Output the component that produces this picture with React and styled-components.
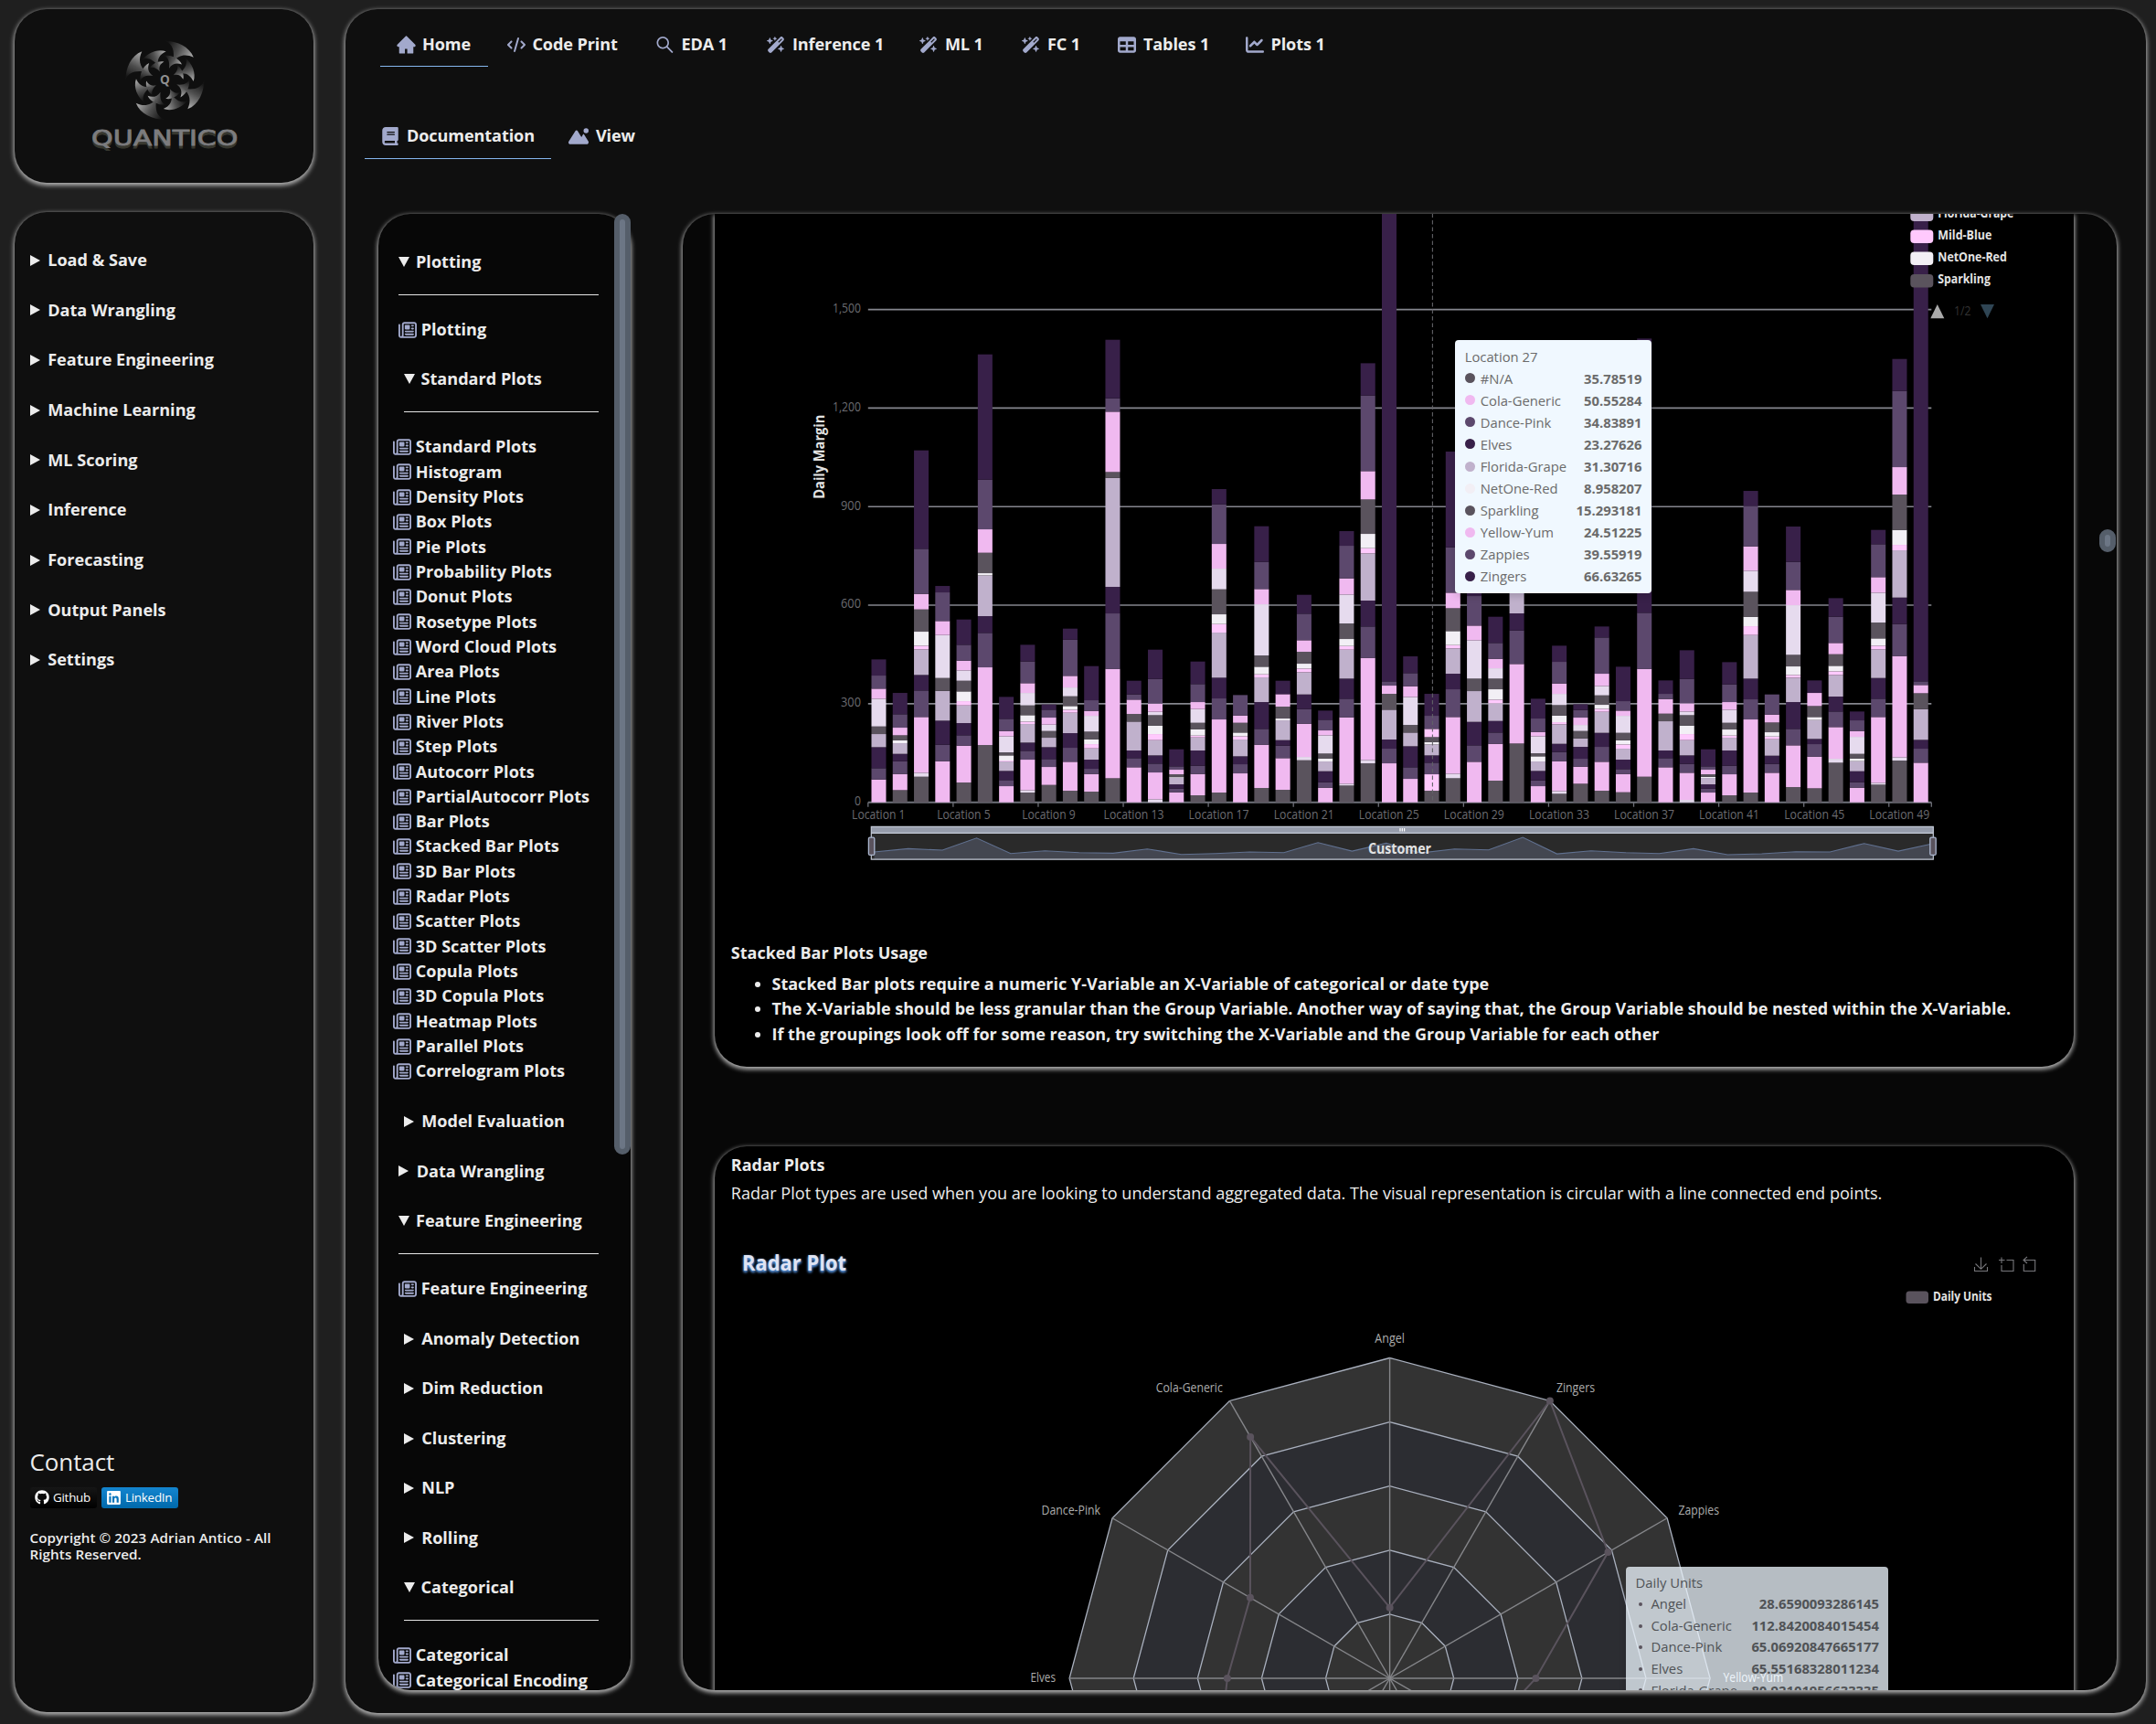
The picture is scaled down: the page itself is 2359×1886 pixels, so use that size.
import React from "react";
import styled, { createGlobalStyle } from "styled-components";
import {
  FaCode,
  FaWandMagicSparkles,
  FaTable,
  FaChartLine,
  FaBook,
  FaMountainSun,
  FaRegNewspaper,
  FaGithub,
  FaLinkedin,
} from "react-icons/fa6";
import { AiFillHome, AiOutlineSearch } from "react-icons/ai";

const FONT = '"Open Sans", "Noto Sans", sans-serif';

const GlobalStyle = createGlobalStyle`
  * { box-sizing: border-box; }
  body {
    margin: 0;
    background: #1f1f1f;
    color: #ececec;
    font-family: ${FONT};
    font-size: 18.1px;
    line-height: 27.3px;
    overflow: hidden;
  }
  svg { display: block; }
`;

const Shell = styled.div`
  display: grid;
  grid-template-columns: 327.5px 1969.5px;
  column-gap: 35px;
  width: 2359px;
  height: 1886px;
  padding: 9.5px 0 0 15.5px;
`;

const Panel = styled.section`
  background: ${(p) => p.$bg || "#0f0f0f"};
  border-radius: 35px;
  box-shadow: 0 2px 5px 1px #b4b4b4;
`;

const LeftColumn = styled.div`
  display: flex;
  flex-direction: column;
  gap: 31.5px;
`;

const LogoCard = styled(Panel)`
  height: 190.5px;
  display: flex;
  justify-content: center;
  padding: 20px 0 0 1px;
`;

const SideCard = styled(Panel)`
  height: 1641px;
  display: flex;
  flex-direction: column;
  padding: 39.7px 17px 0;
`;

const SideMenu = styled.nav`
  display: flex;
  flex-direction: column;
  gap: 27.35px;
  flex: 0 0 1309.8px;
`;

const Disclosure = styled.div`
  display: flex;
  align-items: center;
  gap: ${(p) => (p.$open ? 7 : 8.7)}px;
  height: 27.3px;
  margin-left: ${(p) => p.$indent || 0}px;
  margin-top: ${(p) => p.$gap || 0}px;
  font-weight: 700;
  white-space: nowrap;
`;

const Caret = styled.span`
  width: 0;
  height: 0;
  border-style: solid;
  border-width: ${(p) => (p.$open ? "11.5px 6.3px 0" : "6.3px 0 6.3px 11px")};
  border-color: ${(p) =>
    p.$open ? "#ececec transparent transparent" : "transparent transparent transparent #ececec"};
`;

const ContactTitle = styled.h2`
  margin: 0;
  font-size: 26px;
  font-weight: 400;
  line-height: 36px;
  letter-spacing: -0.1px;
`;

const Badges = styled.div`
  display: flex;
  gap: 5px;
  margin-top: 10px;
`;

const Badge = styled.a`
  display: flex;
  align-items: center;
  gap: 4.5px;
  height: 23px;
  width: ${(p) => p.$w}px;
  padding-left: 5px;
  border-radius: 3px;
  background: linear-gradient(${(p) => p.$from}, ${(p) => p.$to});
  color: #fff;
  font-size: 13.4px;
  letter-spacing: -0.25px;
`;

const Copyright = styled.p`
  margin: 23px 0 0;
  font-size: 15.2px;
  font-weight: 600;
  line-height: 18px;
  letter-spacing: 0.08px;
  white-space: nowrap;
`;

const Main = styled(Panel)`
  height: 1864px;
  display: flex;
  flex-direction: column;
`;

const TabBar = styled.nav`
  display: flex;
  height: ${(p) => p.$h}px;
  padding-top: ${(p) => p.$top || 0}px;
  padding-left: ${(p) => p.$left}px;
`;

const Tab = styled.div`
  display: flex;
  align-items: center;
  flex: 0 0 ${(p) => p.$w}px;
  height: 48px;
  margin-right: ${(p) => p.$after || 0}px;
  padding: ${(p) => p.$lift ? 0 : 2}px 0 0 17.4px;
  border-bottom: 1px solid ${(p) => (p.$active ? "#85b7ee" : "transparent")};
  font-weight: 700;
  white-space: nowrap;
  letter-spacing: -0.1px;
`;

const IconSlot = styled.span`
  display: flex;
  justify-content: center;
  width: ${(p) => p.$w || 23}px;
  margin-right: 6px;
  color: #a2a9cc;
`;

const Body = styled.div`
  display: flex;
  gap: 57px;
  padding-left: 35.5px;
`;

const PanelFrame = styled.div`
  position: relative;
`;

const DocNav = styled(Panel)`
  width: 276.5px;
  height: 1615px;
  padding: 39.4px 35.5px 0 22px;
  overflow: hidden;
`;

const NavScroll = styled.div`
  position: absolute;
  top: 0;
  right: 0.5px;
  width: 18px;
  height: 1029.5px;
  border-radius: 9px;
  background: #555e6a;
  border: 6px solid #555e6a;
  &::after {
    content: "";
    display: block;
    height: 100%;
    border-radius: 3px;
    background: #6c7685;
  }
`;

const Rule = styled.hr`
  height: 1px;
  border: 0;
  background: #e6e6e6;
  margin: 22px 0 24px ${(p) => p.$indent || 0}px;
`;

const NavLink = styled.a`
  display: flex;
  align-items: center;
  gap: 5.2px;
  height: 27.32px;
  margin-left: ${(p) => p.$indent || 0}px;
  font-weight: 700;
  white-space: nowrap;
  svg {
    color: #a2a9cc;
    width: 20px;
    height: 20px;
    flex: none;
  }
`;

const Pane = styled(Panel)`
  position: relative;
  width: 1568.5px;
  height: 1615px;
  padding: 0 46.5px 0 35px;
  overflow: hidden;
`;

const PaneScroll = styled(NavScroll)`
  top: 345px;
  right: 1px;
  height: 25px;
`;

const ArticleCard = styled(Panel)`
  height: ${(p) => p.$h}px;
  margin-bottom: 87.2px;
  border-radius: ${(p) => (p.$cut ? "0 0 35px 35px" : "35px")};
  padding-top: ${(p) => (p.$cut ? 0 : 7.6)}px;
`;

const ChartBox = styled.div`
  position: relative;
  height: ${(p) => p.$h}px;
`;

const Heading = styled.h3`
  margin: 0 0 ${(p) => p.$after}px 17.8px;
  font-size: 18px;
  font-weight: 700;
  line-height: 27.3px;
`;

const Paragraph = styled.p`
  margin: 0 0 0 17.8px;
  font-size: 18.12px;
  white-space: nowrap;
`;

const Bullets = styled.ul`
  margin: 0;
  padding-left: 62.5px;
  font-size: 18.02px;
  font-weight: 700;
  white-space: nowrap;
`;

const Tooltip = styled.div`
  position: absolute;
  left: ${(p) => p.$x}px;
  top: ${(p) => p.$y}px;
  width: ${(p) => p.$w}px;
  padding: ${(p) => p.$pad};
  border-radius: 4px;
  background: ${(p) => p.$bg};
  box-shadow: 1px 2px 10px rgba(0, 0, 0, 0.2);
  color: ${(p) => p.$color};
  font-size: 14.8px;
  line-height: ${(p) => p.$row}px;
`;

const TipRow = styled.div`
  display: flex;
  align-items: center;
  height: ${(p) => p.$row}px;
  span { flex: 1; }
  b { font-weight: 700; }
`;

const Dot = styled.i`
  width: ${(p) => p.$size}px;
  height: ${(p) => p.$size}px;
  margin: 0 ${(p) => p.$after}px 0 ${(p) => p.$before || 0}px;
  border-radius: 50%;
  background: ${(p) => p.$c};
`;

/* ---------- data ---------- */

const SIDE_ITEMS = [
  "Load & Save",
  "Data Wrangling",
  "Feature Engineering",
  "Machine Learning",
  "ML Scoring",
  "Inference",
  "Forecasting",
  "Output Panels",
  "Settings",
];

const TABS = [
  { label: "Home", icon: AiFillHome, size: 24, w: 118, after: 2.5, active: true },
  { label: "Code Print", icon: FaCode, size: 20, w: 163 },
  { label: "EDA 1", icon: AiOutlineSearch, size: 24, w: 121.5 },
  { label: "Inference 1", icon: FaWandMagicSparkles, size: 20, w: 167 },
  { label: "ML 1", icon: FaWandMagicSparkles, size: 20, w: 112 },
  { label: "FC 1", icon: FaWandMagicSparkles, size: 20, w: 105 },
  { label: "Tables 1", icon: FaTable, size: 20, w: 139.5 },
  { label: "Plots 1", icon: FaChartLine, size: 20, w: 120 },
];

const PLOT_LINKS = [
  "Standard Plots", "Histogram", "Density Plots", "Box Plots", "Pie Plots",
  "Probability Plots", "Donut Plots", "Rosetype Plots", "Word Cloud Plots",
  "Area Plots", "Line Plots", "River Plots", "Step Plots", "Autocorr Plots",
  "PartialAutocorr Plots", "Bar Plots", "Stacked Bar Plots", "3D Bar Plots",
  "Radar Plots", "Scatter Plots", "3D Scatter Plots", "Copula Plots",
  "3D Copula Plots", "Heatmap Plots", "Parallel Plots", "Correlogram Plots",
];

const SERIES = {
  a: "#5a535d",
  l: "#e6dbee",
  p: "#f0b9f0",
  d: "#5c486d",
  e: "#382049",
  f: "#c0b1cc",
  m: "#ffc9fd",
  n: "#f2eff5",
};

/* One entry per location, bottom to top: series key, then the level where that
   block ends, counted in thirds of a pixel from the plot origin. */
const LEVEL_ZERO = 832;
const STACKS = [
  "p757 d720 e651 f608 a583 l492 p459 d416 e363",
  "a792 p739 d697 e673 f638 n628 a612 p587 d543 e473",
  "a748 l735 p552 d465 e414 f330 m318 n272 a199 p148 d0 e-323",
  "p697 d643 e564 f466 a424 l283 p237 d143 e122",
  "a767 p646 d612 e572 f514 m500 n468 a433 l399 p367 d315 e232",
  "a644 p389 d276 e221 f87 n80 a13 p-64 d-227 e-638",
  "p779 d759 e729 f698 m695 n678 a668 l615 p598 d558 e486",
  "a800 l792 p692 d663 e636 f575 m567 n546 a514 l473 p441 d370 e315",
  "a775 p716 d690 e651 f620 a598 l577 p554 d528 e511",
  "a794 p699 d653 e605 f538 m528 n516 a484 l455 p417 d298 e262",
  "a797 p739 d722 e692 f655 m641 n625 a600 l548 p532 d497 e385",
  "a753 p394 d212 e125 f-233 a-252 p-450 d-494 e-686",
  "p717 d687 e662 f567 a542 p495 d478 e433",
  "l822 p734 d705 e678 f628 m608 n580 a546 l535 p508 d427 e331",
  "p799 d787 e773 f751 n748 a740 p725 d714 e658",
  "a809 p739 d712 e662 f619 m613 n592 a571 l526 p503 d444 e370",
  "a800 p560 d491 e423 f275 m247 n215 a133 l65 p-16 d-146 e-196",
  "p737 d707 e681 f626 m615 n603 a571 p547 d480",
  "a785 p643 d591 e503 f422 m412 n387 a350 l182 p132 d43 e-74",
  "a791 p687 d646 e628 f563 n557 a518 p477 e433",
  "a694 l683 p574 d526 e478 f405 m393 n377 a338 p300 d213 e151",
  "p784 d766 e730 f698 n688 a672 l612 p596 d561 e531",
  "a777 l771 p553 d492 e426 f331 m319 n296 a245 l150 p97 d-10 e-58",
  "a704 l693 p358 d255 e170 f15 m-2 n-49 a-162 p-255 d-503 e-609",
  "p704 d656 e626 f528 a476 p449 d435 e-1200",
  "p755 d717 e648 f603 a578 l486 p451 d408 e353",
  "a794 m740 d702 e678 f642 n634 a618 m591 d548 e476",
  "a753 l738 p552 d461 e410 f327 m316 n270 a195 p144 d-5 e-319",
  "p699 d645 e568 f467 a426 l300 p252 d155 e130",
  "a761 p640 d603 e565 f507 m495 n461 a426 l392 p361 d309 e223",
  "a639 p378 d268 e212 f70",
  "p779 d760 e729 f698 n681 a671 l615 p601 d557 e492",
  "a804 l795 p697 d667 e640 f576 m569 n547 a513 l476 p442 d371 e318",
  "a771 p715 d689 e650 f622 a598 l578 p554 d529 e510",
  "a794 p699 d650 e604 f535 m525 n512 a481 l450 p410 d291 e255",
  "a799 p739 d723 e692 f656 m642 n628 a604 l548 p531 d500 e387",
  "a748 p394 d210 e-690",
  "p717 d687 e662 f566 a541 p493 d476 e432",
  "l824 p735 d706 e678 f628 m608 n580 a546 l534 p507 d427 e333",
  "p800 d787 e773 f752 n748 a740 p725 d714 e658",
  "a809 p740 d712 e662 f620 m613 n593 a571 l528 p503 d445 e372",
  "a800 p560 d494 e426 f283 m254 n223 a141 l72 p-8 d-140 e-190",
  "p735 d706 e679 f625 m616 n602 a570 p544 d478",
  "a782 p645 d591 e503 f423 m414 n386 a348 l185 p135 d43 e-73",
  "a786 p682 d641 e624 f562 n552 a516 p473 e432",
  "a702 l689 p585 d534 e485 f414 m402 n384 a346 p309 d223 e162",
  "p784 d766 e730 f697 n688 a673 l617 p598 d563 e534",
  "a774 l768 p552 d492 e424 f330 m318 n294 a242 l144 p93 d-15 e-62",
  "a695 l684 p352 d247 e160 f5 m-13 n-62 a-178 p-268 d-518 e-623",
  "p702 d656 e627 f526 a474 p447 d435 e-1200",
];

const OVERVIEW = [
  995, 984, 989, 949, 1000, 991, 997, 999, 985, 1003, 1000, 995, 997, 964, 992,
  966, 998, 985, 988, 947, 1001, 991, 997, 1000, 984, 1004, 1001, 994, 995, 967,
  992, 968,
];

const TIP_ROWS = [
  ["#N/A", "35.78519", "#5a535d"],
  ["Cola-Generic", "50.55284", "#f0b9f0"],
  ["Dance-Pink", "34.83891", "#5c486d"],
  ["Elves", "23.27626", "#382049"],
  ["Florida-Grape", "31.30716", "#c0b1cc"],
  ["NetOne-Red", "8.958207", "#f2eff5"],
  ["Sparkling", "15.293181", "#5a535d"],
  ["Yellow-Yum", "24.51225", "#f0b9f0"],
  ["Zappies", "39.55919", "#5c486d"],
  ["Zingers", "66.63265", "#382049"],
];

const RADAR_ROWS = [
  ["Angel", "28.6590093286145"],
  ["Cola-Generic", "112.8420084015454"],
  ["Dance-Pink", "65.06920847665177"],
  ["Elves", "65.55168328011234"],
  ["Florida-Grape", "80.92101956633335"],
];

/* ---------- drawings ---------- */

function Label({ x, y, w, size = 13, bold, fill = "#6b6b70", anchor = "start", children, ...rest }) {
  return (
    <text
      x={x}
      y={y}
      fontFamily={FONT}
      fontSize={size}
      fontWeight={bold ? 700 : 400}
      fill={fill}
      textAnchor={anchor}
      textLength={w}
      lengthAdjust="spacingAndGlyphs"
      dominantBaseline="central"
      {...rest}
    >
      {children}
    </text>
  );
}

const BLADE = "M0-43C13-43 27-37 31.5-25C23-29 15-28 9-20C11-32 9-40 0-43Z";
const BLADE_TIERS = [
  [36, 0.5],
  [-4, 0.63],
  [41, 0.78],
  [0, 1],
];

function Logo() {
  return (
    <svg width="190" height="150" viewBox="86 30 190 150">
      <defs>
        <linearGradient id="blade" x1="0" y1="0.2" x2="1" y2="0.6">
          <stop offset="0.05" stopColor="#141414" />
          <stop offset="0.5" stopColor="#4e4e4e" />
          <stop offset="1" stopColor="#a8a8a8" />
        </linearGradient>
      </defs>
      <g transform="translate(181.3 87.7)">
        {BLADE_TIERS.map(([turn, scale]) =>
          [0, 90, 180, 270].map((a) => (
            <path key={`${turn}-${a}`} d={BLADE} fill="url(#blade)" transform={`rotate(${turn + a}) scale(${scale})`} />
          ))
        )}
      </g>
      <Label x={181.3} y={87.2} size={13.5} fill="#8f8f8f" anchor="middle" bold>Q</Label>
      {[["#38382f", 3], ["#7c7c7e", 0]].map(([fill, dy]) => (
        <text
          key={fill}
          x="101"
          y={159 + dy}
          fill={fill}
          stroke={fill}
          strokeWidth="0.8"
          fontFamily='"DejaVu Sans", sans-serif'
          fontSize="23.5"
          textLength="160.5"
          lengthAdjust="spacingAndGlyphs"
          aria-hidden={dy > 0}
        >
          QUANTICO
        </text>
      ))}
    </svg>
  );
}

const AXIS_Y = 877.3;
const BAND = 23.27;
const AXIS_X = 949.8;

function StackedBarChart() {
  const levelY = (level) => AXIS_Y - (LEVEL_ZERO - level) / 3;
  const shape = OVERVIEW.map((v, i) => `${956.5 + i * 37.35},${600 + v / 3}`).join(" ");
  return (
    <svg width="1488" height="795" viewBox="782 233.6 1488 795">
      {[0, 300, 600, 900, 1200, 1500].map((v) => {
        const y = AXIS_Y - v * 0.3594;
        return (
          <g key={v}>
            <line x1={AXIS_X} x2="2113.3" y1={y} y2={y} stroke={v ? "#85868e" : "#6E7079"} strokeWidth={v ? 1.6 : 2} />
            <Label x={942} y={y - 2.2} w={v >= 1000 ? 31 : v ? 22 : 7} size={13.6} anchor="end">{v.toLocaleString("en-US")}</Label>
          </g>
        );
      })}
      {STACKS.map((stack, i) => {
        let base = LEVEL_ZERO;
        return stack.split(" ").map((part) => {
          const top = Number(part.slice(1));
          const y = levelY(top);
          const h = (base - top) / 3;
          base = top;
          return <rect key={`${i}${part}`} x={953.5 + i * BAND} y={y} width="16" height={h} fill={SERIES[part[0]]} />;
        });
      })}
      {Array.from({ length: 14 }, (_, k) => {
        const x = k === 13 ? 2113.3 : AXIS_X + k * 4 * BAND;
        return <line key={k} x1={x} x2={x} y1={AXIS_Y} y2={AXIS_Y + 5} stroke="#6E7079" strokeWidth="1.3" />;
      })}
      {Array.from({ length: 13 }, (_, k) => (
        <Label key={k} x={961.3 + k * 4 * BAND} y={890} w={k < 3 ? 58.5 : 66} size={13.6} anchor="middle">{`Location ${1 + k * 4}`}</Label>
      ))}
      <Label x={0} y={0} w={92} size={15.5} bold fill="#e2e2e2" anchor="middle" transform="translate(896 499.3) rotate(-90)">Daily Margin</Label>
      <line x1="1567.4" x2="1567.4" y1="233" y2={AXIS_Y} stroke="#626267" strokeWidth="1.1" strokeDasharray="4.5 3" />

      {[["Florida-Grape", 233.5, "#c0b1cc", 83], ["Mild-Blue", 257.5, "#ffc9fd", 59], ["NetOne-Red", 281.7, "#f2eff5", 75.5], ["Sparkling", 306, "#5a535d", 57.5]].map(([name, y, c, w]) => (
        <g key={name}>
          <rect x="2090.3" y={y - 6.5} width="25" height="14.5" rx="4" fill={c} />
          <Label x={2120.3} y={y - 1.2} w={w} size={13.5} bold fill="#e4e4e4">{name}</Label>
        </g>
      ))}
      <path d="M2112.3 347.8L2119.8 332.5L2127.3 347.8Z" fill="#aaa" />
      <Label x={2138} y={338.7} w={18.5} size={13.6} fill="#333">1/2</Label>
      <path d="M2167 332.5H2182L2174.5 347.8Z" fill="#2f4554" />

      <rect x="953.3" y="903.7" width="1162" height="7" fill="#969cab" />
      <rect x="953.3" y="910.7" width="1162" height="29" fill="#2a2a2a" />
      <polygon points={`956.5,939.5 ${shape} 2115,939.5`} fill="#434650" />
      <polyline points={shape} fill="none" stroke="#60708f" strokeWidth="1.1" />
      <path d="M953.3 904H2115.3V939.7H953.3ZM953.3 911H2115.3" fill="none" stroke="#c3c9d6" strokeWidth="1.2" />
      {[953.6, 2115].map((x) => (
        <rect key={x} x={x - 3.2} y="915.7" width="6.4" height="19.3" rx="1.5" fill="#5a535d" stroke="#acb8d1" strokeWidth="1.3" />
      ))}
      <path d="M1532 905.5V909M1534.3 905.5V909M1536.6 905.5V909" stroke="#fff" strokeWidth="1.2" />
      <Label x={1531.5} y={927.3} w={69} size={15.5} bold fill="#e2e2e2" anchor="middle">Customer</Label>
    </svg>
  );
}

const CX = 1520.6;
const CY = 1836;
const RADIUS = 350.5;
const RADAR_VALUES = [0.2206, 0.87, 0.503, 0.507, 0.626, 0.5, 0.5, 0.5, 0.343, 0.456, 0.787, 1];

const spoke = (i, r) => {
  const t = (i * Math.PI) / 6;
  return [CX - Math.sin(t) * r * RADIUS, CY - Math.cos(t) * r * RADIUS];
};
const ring = (r) => RADAR_VALUES.map((_, i) => spoke(i, r).join(",")).join(" ");

function RadarChart() {
  return (
    <svg width="1488" height="529" viewBox="782 1320 1488 529">
      <Label x={812} y={1381} w={114} size={22.5} bold fill="#dfe3f2" style={{ textShadow: "0 1px 3px #5f97dc, 0 2px 3px #4a86d0" }}>Radar Plot</Label>
      {[1, 0.8, 0.6, 0.4, 0.2].map((r, i) => (
        <polygon key={r} points={ring(r)} fill={i % 2 ? "#2c2d32" : "#333"} stroke="#a9b0be" strokeWidth="1.3" />
      ))}
      {RADAR_VALUES.map((_, i) => {
        const [x, y] = spoke(i, 1);
        return <line key={i} x1={CX} y1={CY} x2={x} y2={y} stroke="#85868a" strokeWidth="1.4" />;
      })}
      <polygon points={RADAR_VALUES.map((v, i) => spoke(i, v).join(",")).join(" ")} fill="none" stroke="#5a535d" strokeWidth="2" />
      {RADAR_VALUES.map((v, i) => {
        const [x, y] = spoke(i, v);
        return <circle key={i} cx={x} cy={y} r="4" fill="#5a535d" />;
      })}
      <Label x={1520.6} y={1463.5} w={32.5} size={13.6} fill="#acacac" anchor="middle">Angel</Label>
      <Label x={1337.8} y={1517.5} w={73} size={13.6} fill="#acacac" anchor="end">Cola-Generic</Label>
      <Label x={1204} y={1651.5} w={64.5} size={13.6} fill="#acacac" anchor="end">Dance-Pink</Label>
      <Label x={1155} y={1834.6} w={27.5} size={13.6} fill="#acacac" anchor="end">Elves</Label>
      <Label x={1703} y={1517.5} w={42} size={13.6} fill="#acacac">Zingers</Label>
      <Label x={1836.5} y={1651.5} w={44.5} size={13.6} fill="#acacac">Zappies</Label>
      <Label x={1885.6} y={1834.6} w={65.5} size={13.6} fill="#fff">Yellow-Yum</Label>

      <g fill="none" stroke="#77777b" strokeWidth="1.1">
        <path d="M2167.5 1375.5V1388M2161.5 1382.5L2167.5 1388.3L2173.5 1382.5M2160.5 1386V1390.5H2174.5V1386" />
        <path d="M2187 1378.5H2193.5M2190 1375.5V1382M2195.5 1378.5H2203V1390.5H2190V1384" />
        <path d="M2213.8 1378.5H2226.7V1390.5H2214.3V1383M2218 1374.8L2214 1378.5L2218 1382" />
      </g>
      <rect x="2085.5" y="1412.4" width="24.5" height="13.6" rx="3.5" fill="#5a535d" />
      <Label x={2115} y={1417.8} w={64.5} size={13.5} bold fill="#e4e4e4">Daily Units</Label>
    </svg>
  );
}

/* ---------- page ---------- */

function Item({ open, children, ...rest }) {
  return (
    <Disclosure $open={open} {...rest}>
      <Caret $open={open} />
      {children}
    </Disclosure>
  );
}

function DocLink({ indent, children }) {
  return (
    <NavLink $indent={indent}>
      <FaRegNewspaper />
      {children}
    </NavLink>
  );
}

export default function App() {
  return (
    <>
      <GlobalStyle />
      <Shell>
        <LeftColumn>
          <LogoCard>
            <Logo />
          </LogoCard>
          <SideCard>
            <SideMenu>
              {SIDE_ITEMS.map((label) => (
                <Item key={label}>{label}</Item>
              ))}
            </SideMenu>
            <ContactTitle>Contact</ContactTitle>
            <Badges>
              <Badge $w={73} $from="#161616" $to="#000">
                <FaGithub size={16} />
                Github
              </Badge>
              <Badge $w={84} $from="#1485cf" $to="#0069ab">
                <FaLinkedin size={17} />
                LinkedIn
              </Badge>
            </Badges>
            <Copyright>
              Copyright © 2023 Adrian Antico - All
              <br />
              Rights Reserved.
            </Copyright>
          </SideCard>
        </LeftColumn>

        <Main>
          <TabBar $h={116} $left={37.5} $top={15}>
            {TABS.map(({ label, icon: Icon, size, w, after, active }) => (
              <Tab key={label} $w={w} $after={after} $active={active}>
                <IconSlot>
                  <Icon size={size} />
                </IconSlot>
                {label}
              </Tab>
            ))}
          </TabBar>
          <TabBar $h={108} $left={20.5}>
            <Tab $w={204} $active $lift>
              <IconSlot>
                <FaBook size={20} />
              </IconSlot>
              Documentation
            </Tab>
            <Tab $w={120} $lift>
              <IconSlot $w={26}>
                <FaMountainSun size={22} />
              </IconSlot>
              View
            </Tab>
          </TabBar>

          <Body>
            <PanelFrame>
              <DocNav $bg="#070707">
                <Item open $indent={0.5}>Plotting</Item>
                <Rule />
                <DocLink>Plotting</DocLink>
                <Item open $indent={6} $gap={26.7}>Standard Plots</Item>
                <Rule $indent={6} />
                {PLOT_LINKS.map((label) => (
                  <DocLink key={label} indent={-6}>{label}</DocLink>
                ))}
                <Item $indent={6} $gap={27.3}>Model Evaluation</Item>
                <Item $indent={0.5} $gap={27.3}>Data Wrangling</Item>
                <Item open $indent={0.5} $gap={27.3}>Feature Engineering</Item>
                <Rule />
                <DocLink>Feature Engineering</DocLink>
                {["Anomaly Detection", "Dim Reduction", "Clustering", "NLP", "Rolling"].map((label) => (
                  <Item key={label} $indent={6} $gap={27.2}>{label}</Item>
                ))}
                <Item open $indent={6} $gap={27}>Categorical</Item>
                <Rule $indent={6} />
                <DocLink indent={-6}>Categorical</DocLink>
                <DocLink indent={-6}>Categorical Encoding</DocLink>
              </DocNav>
              <NavScroll />
            </PanelFrame>

            <Pane $bg="#070707">
              <ArticleCard $bg="#000" $cut $h={933}>
                <ChartBox $h={795}>
                  <StackedBarChart />
                  <Tooltip $x={810.2} $y={138} $w={215.3} $pad="6px 11px 6px 10.5px" $bg="#f0f8ff" $color="#6b6b6b" $row={24.1}>
                    Location 27
                    {TIP_ROWS.map(([name, value, c]) => (
                      <TipRow key={name} $row={24.1}>
                        <Dot $size={11} $after={6} $c={c} />
                        <span>{name}</span>
                        <b>{value}</b>
                      </TipRow>
                    ))}
                  </Tooltip>
                </ChartBox>
                <Heading $after={7.2}>Stacked Bar Plots Usage</Heading>
                <Bullets>
                  <li>Stacked Bar plots require a numeric Y-Variable an X-Variable of categorical or date type</li>
                  <li>The X-Variable should be less granular than the Group Variable. Another way of saying that, the Group Variable should be nested within the X-Variable.</li>
                  <li>If the groupings look off for some reason, try switching the X-Variable and the Group Variable for each other</li>
                </Bullets>
              </ArticleCard>

              <ArticleCard $bg="#000" $h={900}>
                <Heading $after={3.7}>Radar Plots</Heading>
                <Paragraph>
                  Radar Plot types are used when you are looking to understand aggregated data. The visual representation is circular with a line connected end points.
                </Paragraph>
                <ChartBox $h={529}>
                  <RadarChart />
                  <Tooltip $x={997} $y={394.5} $w={287} $pad="5.5px 10px 5px 10.5px" $bg="rgba(233, 242, 250, 0.78)" $color="#505356" $row={23.6}>
                    Daily Units
                    {RADAR_ROWS.map(([name, value]) => (
                      <TipRow key={name} $row={23.6}>
                        <Dot $size={4} $before={3} $after={10} $c="#5a535d" />
                        <span>{name}</span>
                        <b>{value}</b>
                      </TipRow>
                    ))}
                  </Tooltip>
                </ChartBox>
              </ArticleCard>
              <PaneScroll />
            </Pane>
          </Body>
        </Main>
      </Shell>
    </>
  );
}
